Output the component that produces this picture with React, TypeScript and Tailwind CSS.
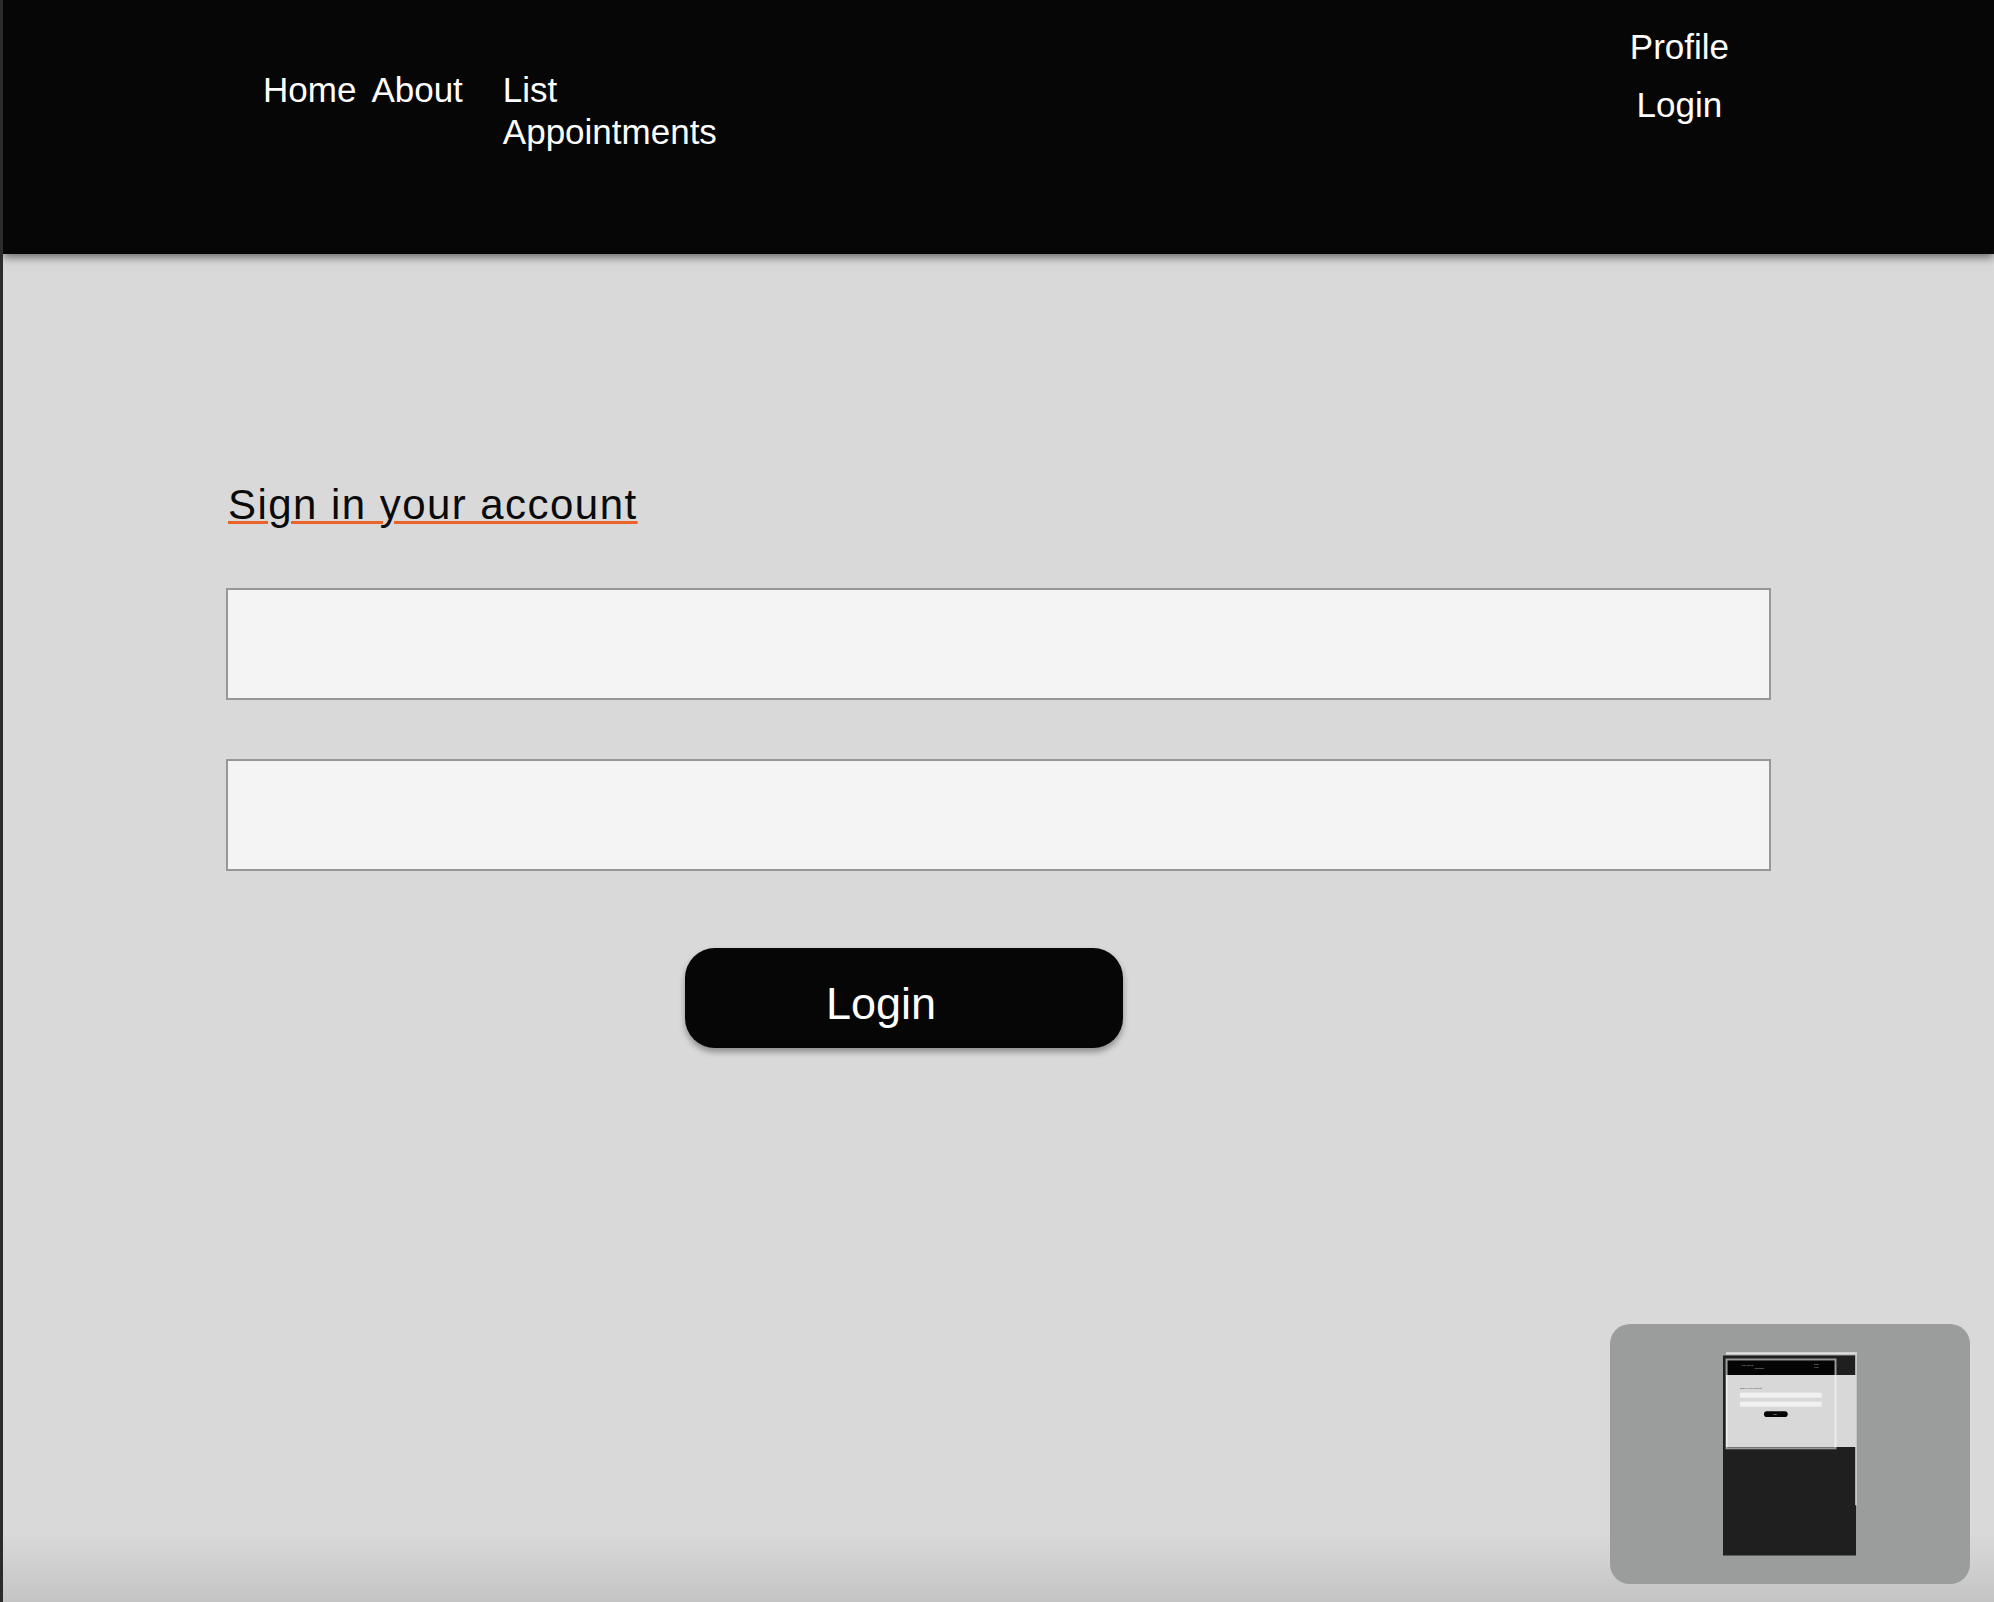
import React from "react";

function MiniMap() {
  return (
    <div className="absolute right-[24px] bottom-[18px] h-[260px] w-[360px] overflow-hidden rounded-[20px] bg-[#9b9d9c]">
      <svg width="360" height="260" viewBox="0 0 360 260" className="block blur-[0.5px]">
        <rect x="113" y="31.5" width="133" height="200" fill="#1f1f1f" />
        <rect x="116" y="28.3" width="131" height="2.2" fill="#e2e2e2" />
        <rect x="245.2" y="28.3" width="1.6" height="153" fill="#cfcfcf" />
        <rect x="116" y="51" width="130" height="72" fill="#d8d8d8" />
        <rect x="118" y="36" width="107" height="15" fill="#050505" />
        <text x="131.5" y="42.4" fontSize="1.6" fill="#bdbdbd" fontFamily="Liberation Sans, Arial, sans-serif">Home About List</text>
        <text x="144" y="45.2" fontSize="1.6" fill="#bdbdbd" fontFamily="Liberation Sans, Arial, sans-serif">Appointments</text>
        <text x="204" y="40.6" fontSize="1.7" fill="#bdbdbd" fontFamily="Liberation Sans, Arial, sans-serif">Profile</text>
        <text x="204.3" y="43.6" fontSize="1.7" fill="#bdbdbd" fontFamily="Liberation Sans, Arial, sans-serif">Login</text>
        <text x="130" y="65" fontSize="2.4" fill="#444" fontFamily="Liberation Sans, Arial, sans-serif">Sign in your account</text>
        <rect x="130" y="68.7" width="81.7" height="5" fill="#f1f1f1" />
        <rect x="130" y="77.7" width="81.7" height="5" fill="#f1f1f1" />
        <rect x="154" y="87.3" width="23.7" height="5.7" rx="2.8" fill="#050505" />
        <text x="163.2" y="90.9" fontSize="1.6" fill="#cfcfcf" fontFamily="Liberation Sans, Arial, sans-serif">Login</text>
        <rect x="116.5" y="35.5" width="109" height="88.8" fill="none" stroke="#ffffff" strokeOpacity="0.55" strokeWidth="2" />
      </svg>
    </div>
  );
}

export default function App() {
  return (
    <div className="relative flex h-[1602px] w-full flex-col overflow-hidden border-l-[3px] border-[#2b2b2b] bg-[#d9d9d9] font-['Liberation_Sans',Arial,Helvetica,sans-serif]">
      <header className="relative z-10 flex h-[254px] shrink-0 items-start justify-between bg-[#060606] pl-[260px] pr-[265px] text-[35px] leading-[42px] text-white shadow-[0_3px_9px_rgba(0,0,0,0.55)]">
        <nav className="flex items-start pt-[69px]">
          <a className="block">Home</a>
          <a className="ml-[15px] block">About</a>
          <a className="ml-[40px] block w-[240px]">List Appointments</a>
        </nav>
        <div className="flex flex-col items-center gap-[16px] pt-[26px]">
          <a className="block">Profile</a>
          <a className="block">Login</a>
        </div>
      </header>

      <main className="flex flex-1 flex-col bg-[linear-gradient(to_bottom,#d9d9d9_95%,#c4c4c4)] px-[223px] pt-[227px]">
        <h1 className="ml-[2px] self-start text-[42px] leading-[48px] tracking-[1.45px] text-[#0a0a0a] underline decoration-[#e9632b] decoration-[3px] underline-offset-[2px]">
          Sign in your account
        </h1>
        <input
          type="text"
          className="mt-[59px] block h-[112px] w-full border-2 border-[#979797] bg-[#f4f4f4] px-4 text-[35px] outline-none"
        />
        <input
          type="password"
          className="mt-[59px] block h-[112px] w-full border-2 border-[#979797] bg-[#f4f4f4] px-4 text-[35px] outline-none"
        />
        <button className="mt-[77px] ml-[459px] block h-[100px] w-[438px] rounded-[30px] bg-[#060606] pl-[141px] pt-[10px] text-left text-[45px] leading-[45px] text-white shadow-[0_4px_6px_rgba(0,0,0,0.35)]">
          <span className="block">Login</span>
        </button>
      </main>

      <MiniMap />
    </div>
  );
}
